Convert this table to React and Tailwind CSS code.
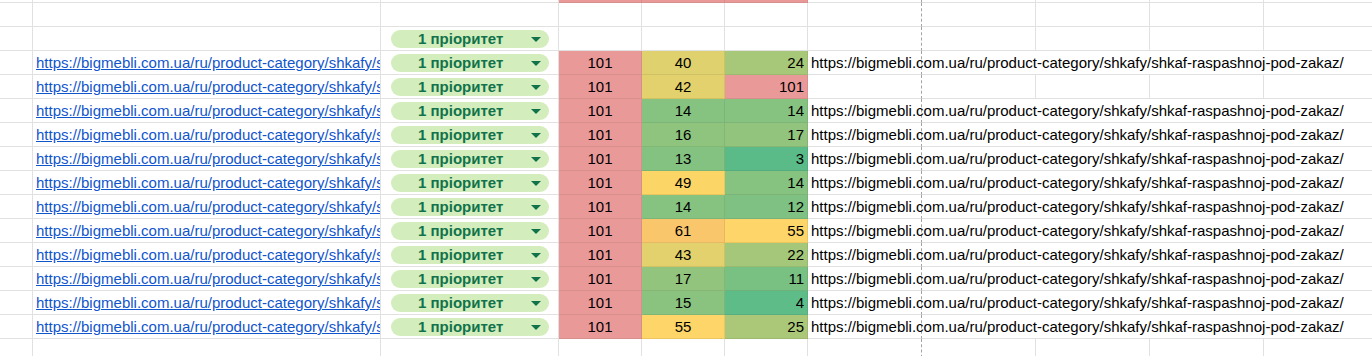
import React from "react";

const URL_TEXT = "https://bigmebli.com.ua/ru/product-category/shkafy/shkaf-raspashnoj-pod-zakaz/";

const rows = [
  { d: "40", e: "24", dc: "bg-[#dfd16d]", ec: "bg-[#a8c879]", url: true },
  { d: "42", e: "101", dc: "bg-[#e2d16c]", ec: "bg-[#ea9999]", url: false },
  { d: "14", e: "14", dc: "bg-[#86c380]", ec: "bg-[#86c380]", url: true },
  { d: "16", e: "17", dc: "bg-[#8ec47e]", ec: "bg-[#92c47d]", url: true },
  { d: "13", e: "3", dc: "bg-[#83c281]", ec: "bg-[#5abb89]", url: true },
  { d: "49", e: "14", dc: "bg-[#fcd567]", ec: "bg-[#86c380]", url: true },
  { d: "14", e: "12", dc: "bg-[#86c380]", ec: "bg-[#7ec182]", url: true },
  { d: "61", e: "55", dc: "bg-[#f9c66c]", ec: "bg-[#fdd568]", url: true },
  { d: "43", e: "22", dc: "bg-[#e2d16c]", ec: "bg-[#a4c779]", url: true },
  { d: "17", e: "11", dc: "bg-[#92c47d]", ec: "bg-[#79c083]", url: true },
  { d: "15", e: "4", dc: "bg-[#89c37f]", ec: "bg-[#5ebc89]", url: true },
  { d: "55", e: "25", dc: "bg-[#fdd568]", ec: "bg-[#abc878]", url: true },
];

const GRID = "shrink-0 border-b border-r border-[#e1e1e1]";
const COLOR = "shrink-0 border-b border-r border-black/[0.07]";
const DASH = "shrink-0 w-[114px] border-b border-r border-b-[#e1e1e1] border-r-[#a3a3a3] [border-right-style:dashed]";

function Pill() {
  return (
    <div className="pt-[3px] pl-[10px]">
      <div className="flex h-[18px] w-[158px] items-center rounded-full bg-[#d4edbc] pl-[27px] pr-[8px]">
        <span className="text-[15px] font-bold leading-[18px] text-[#11734b]">1 пріоритет</span>
        <svg className="ml-auto" width="10" height="5" viewBox="0 0 10 5">
          <polygon points="0,0 10,0 5,5" fill="#11734b" />
        </svg>
      </div>
    </div>
  );
}

function TailEmpty() {
  return (
    <>
      <div className={DASH}></div>
      <div className={`${GRID} w-[114px]`}></div>
      <div className={`${GRID} w-[114px]`}></div>
      <div className={`${GRID} w-[114px]`}></div>
      <div className="flex-1 border-b border-[#e1e1e1]"></div>
    </>
  );
}

function TailText() {
  return (
    <>
      <div className={`${DASH} overflow-visible whitespace-nowrap pl-[3px] text-[15px] leading-[23px] text-black`}>
        {URL_TEXT}
      </div>
      <div className="shrink-0 w-[114px] border-b border-[#e1e1e1]"></div>
      <div className="shrink-0 w-[114px] border-b border-[#e1e1e1]"></div>
      <div className="shrink-0 w-[114px] border-b border-[#e1e1e1]"></div>
      <div className="flex-1 border-b border-[#e1e1e1]"></div>
    </>
  );
}

export default function App() {
  return (
    <div className="h-[356px] w-[1372px] overflow-hidden bg-white font-['Liberation_Sans',Arial,sans-serif]">
      {/* partial top row */}
      <div className="flex h-[3px]">
        <div className={`${GRID} w-[33px]`}></div>
        <div className={`${GRID} w-[348px]`}></div>
        <div className={`${GRID} w-[178px]`}></div>
        <div className={`${COLOR} w-[83px] bg-[#ea9999]`}></div>
        <div className={`${COLOR} w-[83px] bg-[#ea9999]`}></div>
        <div className={`${COLOR} w-[83px] bg-[#ea9999]`}></div>
        <TailEmpty />
      </div>
      {/* empty row */}
      <div className="flex h-[24px]">
        <div className={`${GRID} w-[33px]`}></div>
        <div className={`${GRID} w-[348px]`}></div>
        <div className={`${GRID} w-[178px]`}></div>
        <div className={`${GRID} w-[83px]`}></div>
        <div className={`${GRID} w-[83px]`}></div>
        <div className={`${GRID} w-[83px]`}></div>
        <TailEmpty />
      </div>
      {/* pill only row */}
      <div className="flex h-[24px]">
        <div className={`${GRID} w-[33px]`}></div>
        <div className={`${GRID} w-[348px]`}></div>
        <div className={`${GRID} w-[178px]`}>
          <Pill />
        </div>
        <div className={`${GRID} w-[83px]`}></div>
        <div className={`${GRID} w-[83px]`}></div>
        <div className={`${GRID} w-[83px]`}></div>
        <TailEmpty />
      </div>
      {rows.map((r, i) => (
        <div key={i} className="flex h-[24px]">
          <div className={`${GRID} w-[33px]`}></div>
          <div className={`${GRID} w-[348px] overflow-hidden whitespace-nowrap pl-[3px] text-[15px] leading-[23px]`}>
            <span className="text-[#1155cc] underline">{URL_TEXT}</span>
          </div>
          <div className={`${GRID} w-[178px]`}>
            <Pill />
          </div>
          <div className={`${COLOR} w-[83px] bg-[#ea9999] text-center text-[15px] leading-[23px] text-black`}>101</div>
          <div className={`${COLOR} w-[83px] ${r.dc} text-center text-[15px] leading-[23px] text-black`}>{r.d}</div>
          <div className={`${COLOR} w-[83px] ${r.ec} pr-[3px] text-right text-[15px] leading-[23px] text-black`}>{r.e}</div>
          {r.url ? <TailText /> : <TailEmpty />}
        </div>
      ))}
      {/* bottom empty row */}
      <div className="flex h-[24px]">
        <div className={`${GRID} w-[33px]`}></div>
        <div className={`${GRID} w-[348px]`}></div>
        <div className={`${GRID} w-[178px]`}></div>
        <div className={`${GRID} w-[83px]`}></div>
        <div className={`${GRID} w-[83px]`}></div>
        <div className={`${GRID} w-[83px]`}></div>
        <TailEmpty />
      </div>
    </div>
  );
}
